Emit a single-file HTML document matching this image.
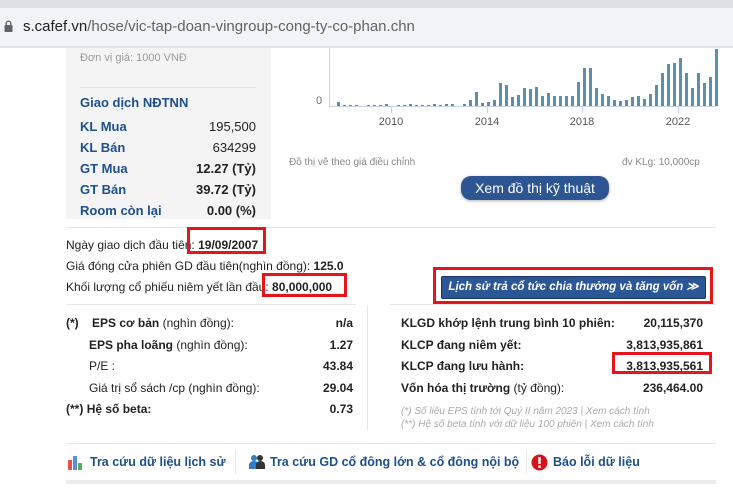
<!DOCTYPE html>
<html><head><meta charset="utf-8"><style>
*{margin:0;padding:0;box-sizing:border-box}
body{width:733px;height:492px;overflow:hidden;background:#fff;font-family:"Liberation Sans",Arial,sans-serif;position:relative;color:#222}
.a{position:absolute;white-space:nowrap}
.b{font-weight:bold}
.blue{color:#1d4f8c}
.red{position:absolute;border:3px solid #e8141c}
</style></head><body>
<div class="a" style="left:0;top:0;width:733px;height:8px;background:#dee1e6"></div>
<div class="a" style="left:0;top:8px;width:733px;height:38px;background:#f1f3f4"></div>
<div class="a" style="left:0;top:46px;width:733px;height:2px;background:#e3e3e3"></div>
<svg class="a" style="left:4px;top:20px" width="9" height="12"><rect x="0.5" y="5" width="8" height="7" rx="1" fill="#5f6368"/><path d="M2.2 5.5V3.5a2.3 2.3 0 0 1 4.6 0v2" stroke="#5f6368" stroke-width="1.4" fill="none"/></svg>
<div class="a" style="left:23px;top:18px;font-size:15px;color:#202124">s.cafef.vn<span style="color:#5f6368">/hose/vic-tap-doan-vingroup-cong-ty-co-phan.chn</span></div>

<div class="a" style="left:66px;top:48px;width:205px;height:171px;background:#f4f4f4"></div>
<div class="a" style="left:80px;top:52px;font-size:11px;color:#999">Đơn vị giá: 1000 VNĐ</div>
<div class="a" style="left:80px;top:87px;width:176px;height:1px;background:#e2e2e2"></div>
<div class="a blue b" style="left:80px;top:95px;font-size:13px">Giao dịch NĐTNN</div>
<div class="a" style="left:80px;top:116px;width:176px;font-size:13px;line-height:21px">
<div style="display:flex;justify-content:space-between"><span class="blue b">KL Mua</span><span>195,500</span></div>
<div style="display:flex;justify-content:space-between"><span class="blue b">KL Bán</span><span>634299</span></div>
<div style="display:flex;justify-content:space-between"><span class="blue b">GT Mua</span><span class="b">12.27 (Tỷ)</span></div>
<div style="display:flex;justify-content:space-between"><span class="blue b">GT Bán</span><span class="b">39.72 (Tỷ)</span></div>
<div style="display:flex;justify-content:space-between"><span class="blue b">Room còn lại</span><span class="b">0.00 (%)</span></div>
</div>

<svg class="a" style="left:280px;top:46px" width="453" height="90">
<line x1="49.5" y1="2" x2="49.5" y2="60" stroke="#c8d4e6"/>
<line x1="49" y1="60.5" x2="436" y2="60.5" stroke="#c8d4e6"/>
<g stroke="#c8d4e6"><line x1="111.5" y1="60" x2="111.5" y2="67"/><line x1="207.5" y1="60" x2="207.5" y2="67"/><line x1="302.5" y1="60" x2="302.5" y2="67"/><line x1="398.5" y1="60" x2="398.5" y2="67"/></g>
<text x="36" y="58" font-size="11" fill="#666" font-family="Liberation Sans">0</text>
<g font-size="11" fill="#555" font-family="Liberation Sans" text-anchor="middle"><text x="111" y="79">2010</text><text x="207" y="79">2014</text><text x="302" y="79">2018</text><text x="398" y="79">2022</text></g>
<g fill="#5a8fae" id="bars"></g>
</svg>
<script>
var h=[4,1,1,1,0,1,1,1,2,0,1,1,2,1,1,1,2,1,2,2,0,2,6,14,3,4,6,23,21,9,11,18,17,19,10,13,10,10,10,10,24,38,38,18,12,10,6,5,6,9,10,7,12,21,33,42,43,48,33,18,33,23,29,57];
var g=document.getElementById('bars'),s='';
for(var i=0;i<h.length;i++){if(h[i]>0){var x=57+i*6;s+='<rect x="'+x+'" y="'+(60-h[i])+'" width="3" height="'+h[i]+'"/>';}}
g.innerHTML=s;
</script>
<div class="a" style="left:289px;top:157px;font-size:10px;color:#888">Đồ thị vẽ theo giá điều chỉnh</div>
<div class="a" style="left:622px;top:157px;font-size:10px;color:#888">đv KLg: 10,000cp</div>
<div class="a" style="left:461px;top:176px;width:148px;height:24px;background:#2d5591;border-radius:10px;color:#fff;font-size:14px;text-align:center;line-height:24px;box-shadow:0 1px 3px rgba(0,0,0,.3)">Xem đồ thị kỹ thuật</div>

<div class="a" style="left:66px;top:227px;width:650px;height:1px;background:#e6e6e6"></div>
<div class="a" style="left:66px;top:235px;font-size:12px;line-height:21px">Ngày giao dịch đầu tiên: <b>19/09/2007</b><br>Giá đóng cửa phiên GD đầu tiên(nghìn đồng): <b>125.0</b><br>Khối lượng cổ phiếu niêm yết lần đầu: <b>80,000,000</b></div>
<div class="red" style="left:187px;top:227px;width:79px;height:27px"></div>
<div class="red" style="left:262px;top:273px;width:85px;height:24px"></div>
<div class="red" style="left:433px;top:267px;width:280px;height:37px"></div>
<div class="a" style="left:441px;top:276px;width:265px;height:23px;background:#2c5797;border:1px solid #1a3468;border-radius:2px;color:#fff;font-size:11.5px;font-weight:bold;font-style:italic;text-align:center;line-height:21px">Lịch sử trả cổ tức chia thưởng và tăng vốn ≫</div>

<div class="a" style="left:66px;top:304px;width:290px;height:1px;background:#e6e6e6"></div>
<div class="a" style="left:390px;top:304px;width:326px;height:1px;background:#e6e6e6"></div>
<div class="a" style="left:367px;top:305px;width:1px;height:125px;background:#e6e6e6"></div>

<div class="a" style="left:66px;top:313px;width:287px;font-size:12px;line-height:21.5px">
<div style="display:flex;justify-content:space-between"><span><b>(*)</b>&nbsp;&nbsp;&nbsp;&nbsp;<b>EPS cơ bản</b> (nghìn đồng):</span><b>n/a</b></div>
<div style="display:flex;justify-content:space-between"><span style="padding-left:23px"><b>EPS pha loãng</b> (nghìn đồng):</span><b>1.27</b></div>
<div style="display:flex;justify-content:space-between"><span style="padding-left:23px">P/E :</span><b>43.84</b></div>
<div style="display:flex;justify-content:space-between"><span style="padding-left:23px">Giá trị sổ sách /cp (nghìn đồng):</span><b>29.04</b></div>
<div style="display:flex;justify-content:space-between"><span><b>(**)</b> <b>Hệ số beta:</b></span><b>0.73</b></div>
</div>
<div class="a" style="left:401px;top:313px;width:302px;font-size:12px;line-height:21.5px">
<div style="display:flex;justify-content:space-between"><b>KLGD khớp lệnh trung bình 10 phiên:</b><b>20,115,370</b></div>
<div style="display:flex;justify-content:space-between"><b>KLCP đang niêm yết:</b><b>3,813,935,861</b></div>
<div style="display:flex;justify-content:space-between"><b>KLCP đang lưu hành:</b><b>3,813,935,561</b></div>
<div style="display:flex;justify-content:space-between"><span><b>Vốn hóa thị trường</b> (tỷ đồng):</span><b>236,464.00</b></div>
</div>
<div class="red" style="left:612px;top:352px;width:100px;height:22px"></div>
<div class="a" style="left:401px;top:405px;font-size:10px;font-style:italic;color:#aaa;line-height:13px">(*) Số liệu EPS tính tới Quý II năm 2023 | Xem cách tính<br>(**) Hệ số beta tính với dữ liệu 100 phiên | Xem cách tính</div>

<div class="a" style="left:66px;top:443px;width:650px;height:1px;background:#e6e6e6"></div>
<svg class="a" style="left:67px;top:455px" width="16" height="16"><rect x="1" y="5" width="4" height="10" fill="#e25050"/><rect x="6" y="1" width="4" height="14" fill="#5a8fd6"/><rect x="11" y="8" width="4" height="7" fill="#5bb05b"/></svg>
<div class="a blue b" style="left:90px;top:455px;font-size:12.5px">Tra cứu dữ liệu lịch sử</div>
<div class="a" style="left:235px;top:450px;width:1px;height:24px;background:#e6e6e6"></div>
<svg class="a" style="left:248px;top:454px" width="18" height="16"><circle cx="6" cy="4" r="3" fill="#2e7fc4"/><path d="M1 15v-4a5 4 0 0 1 10 0v4z" fill="#2e7fc4"/><circle cx="12" cy="4" r="3" fill="#333"/><path d="M8 15v-4a4.5 4 0 0 1 9 0v4z" fill="#333"/></svg>
<div class="a blue b" style="left:270px;top:455px;font-size:12.5px">Tra cứu GD cổ đông lớn &amp; cổ đông nội bộ</div>
<div class="a" style="left:526px;top:450px;width:1px;height:24px;background:#e6e6e6"></div>
<svg class="a" style="left:531px;top:454px" width="17" height="17"><circle cx="8.5" cy="8.5" r="8" fill="#d4141c"/><rect x="7.3" y="3" width="2.4" height="7" fill="#fff"/><rect x="7.3" y="11.5" width="2.4" height="2.4" fill="#fff"/></svg>
<div class="a blue b" style="left:553px;top:455px;font-size:12.5px">Báo lỗi dữ liệu</div>
<div class="a" style="left:66px;top:480px;width:650px;height:4px;background:#ebebeb"></div>
</body></html>
